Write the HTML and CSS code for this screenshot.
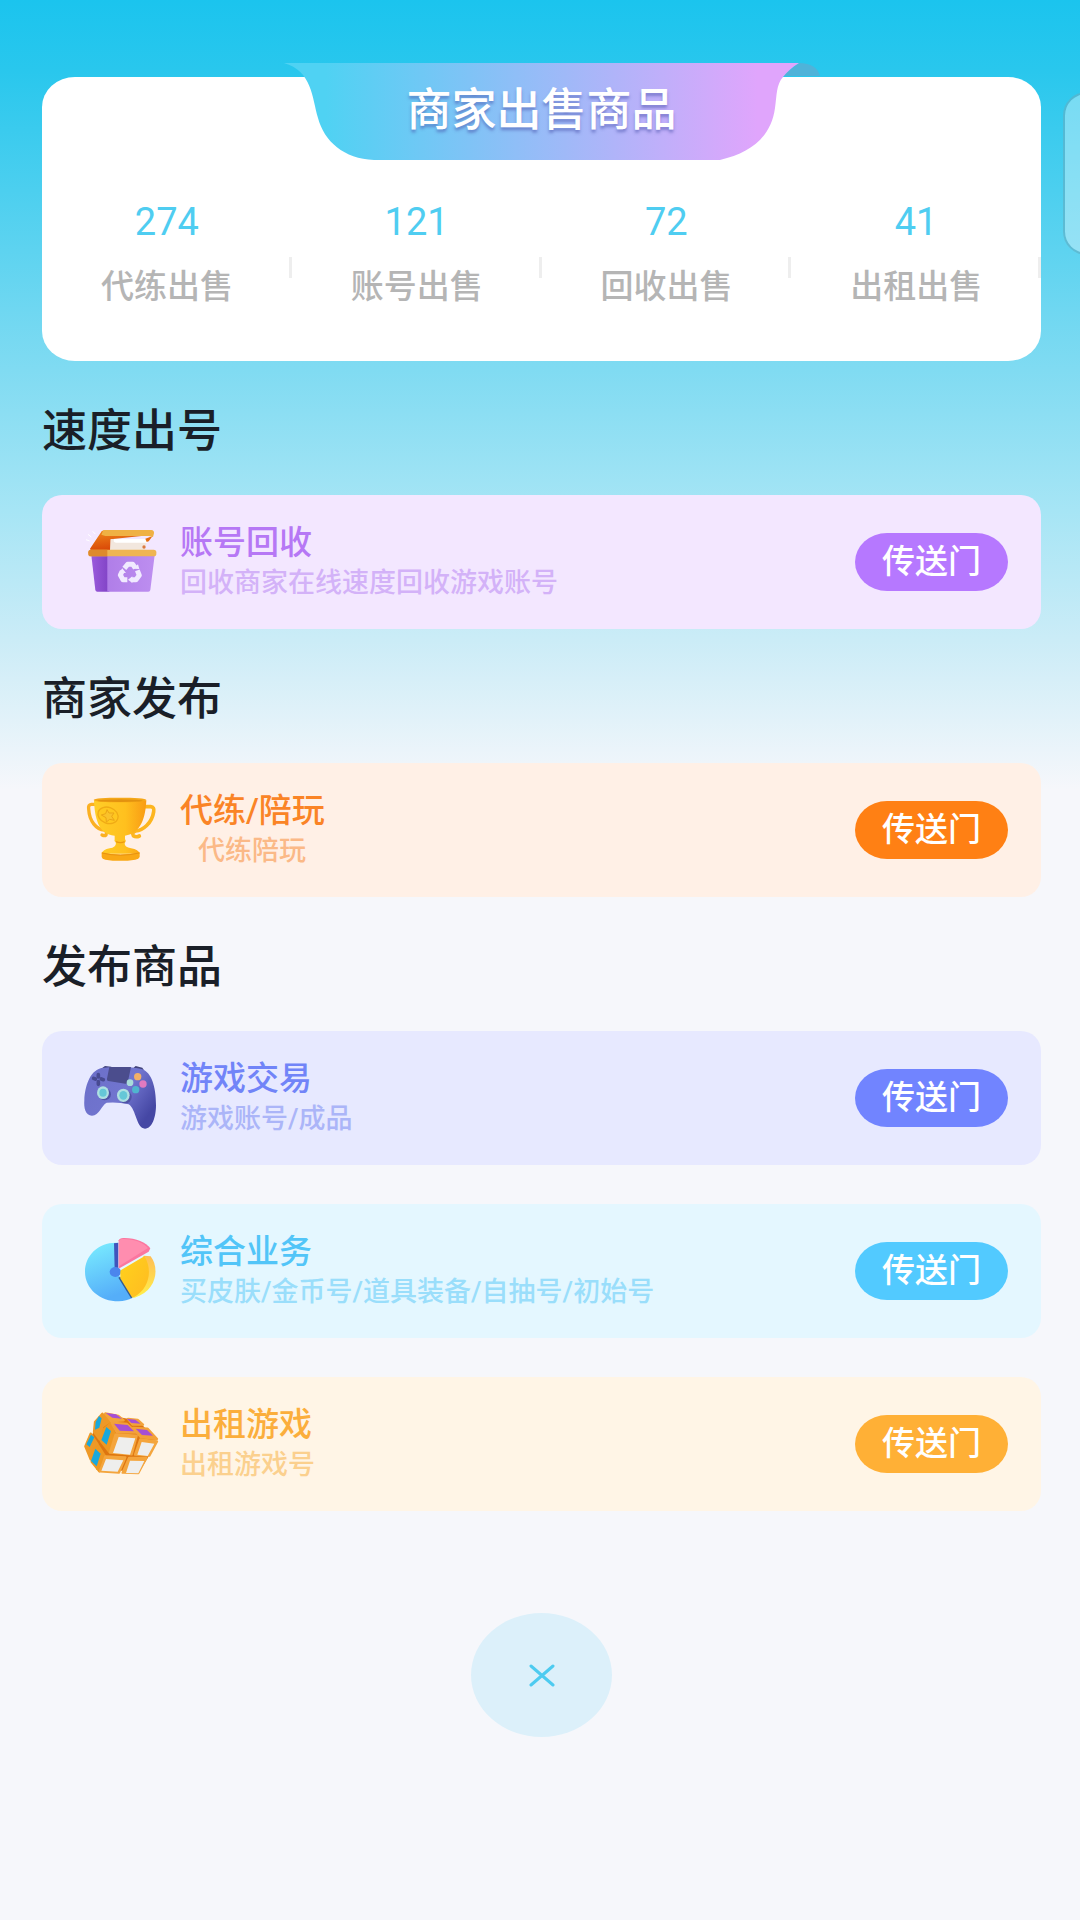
FILE: index.html
```html
<!DOCTYPE html>
<html lang="zh-CN">
<head>
    <meta charset="UTF-8">
    <meta name="viewport" content="width=device-width, initial-scale=1.0">
    <title>商家出售商品</title>
    <link rel="stylesheet" href="styles.css">
</head>
<body>

    <button type="button" class="side-tab" aria-label="菜单"></button>

    <main class="page">
        <section class="stats-card">
            <div class="banner">
                <svg class="banner-shape" viewBox="0 0 556 97" aria-hidden="true">
                    <defs>
                        <linearGradient id="bannerFill" x1="0" x2="1" y1="0" y2="0">
                            <stop offset="0.08" stop-color="#4fd2f3"/>
                            <stop offset="0.92" stop-color="#e0a5fc"/>
                        </linearGradient>
                    </defs>
                    <path d="M535 0C547 0 554 5 556 13H518Z" fill="#4fb3d9"/>
                    <path d="M20 0H535C528 4 523 9 519 14C512 22 513 32 511 45C507 74 487 90 456 97H110C80 96 60 78 54 55C48 34 48 8 20 0Z" fill="url(#bannerFill)"/>
                </svg>
                <h1>商家出售商品</h1>
            </div>
            <ul class="stats">
                <li><strong>274</strong><span>代练出售</span></li>
                <li><strong>121</strong><span>账号出售</span></li>
                <li><strong>72</strong><span>回收出售</span></li>
                <li><strong>41</strong><span>出租出售</span></li>
            </ul>
        </section>

        <section>
            <h2>速度出号</h2>
            <div class="cards">
                <article class="card purple">
                    <svg class="card-icon" viewBox="30 57 240 210" aria-hidden="true">
                        <defs>
                            <linearGradient id="binFront"><stop offset="0" stop-color="#b07ee8"/><stop offset="1" stop-color="#bd8ef0"/></linearGradient>
                            <linearGradient id="binSide"><stop offset="0" stop-color="#9a5bdc"/><stop offset="1" stop-color="#7f41c4"/></linearGradient>
                            <linearGradient id="binLid" x1="0" x2="0.4" y1="0" y2="1"><stop offset="0" stop-color="#f08a1c"/><stop offset="1" stop-color="#d63f05"/></linearGradient>
                        </defs>
                        <path d="M68 70L76 78M54 79L64 87M48 95L59 99" stroke="#fff" stroke-width="3"/>
                        <path d="M96 68L60 122L64 130H122V94L250 80Z" fill="url(#binLid)"/>
                        <path d="M122 94H232L225 126H120Z" fill="#f2e7de"/>
                        <path d="M132 93H228Q236 96 232 104H138Q128 102 132 93Z" fill="#fff"/>
                        <path d="M226 92L248 84L236 100L230 102Z" fill="#e66d12"/>
                        <circle cx="222" cy="117" r="5" fill="#dc7a42"/>
                        <path d="M100 66H244Q253 67 252 76L249 87L236 84H106L94 80Z" fill="#efb144"/>
                        <path d="M64 142H120L118 251H82Q77 251 76 246Z" fill="url(#binSide)"/>
                        <path d="M112 142H254L241 246Q240 251 235 251H112Z" fill="url(#binFront)"/>
                        <rect x="55" y="125" width="204" height="20" rx="8" fill="#efb552"/>
                        <path d="M55 133Q55 125 63 125H112V145H63Q55 145 55 137Z" fill="#de8a2d"/>
                        <g fill="none" stroke="#f1eaff" stroke-width="15" stroke-linejoin="round">
                            <path d="M163 181L173 169H188L196 180"/>
                            <path d="M202 187L208 202L198 215H184"/>
                            <path d="M172 215H159L151 201L157 189"/>
                        </g>
                        <path d="M188 182L208 183L204 169ZM187 205V225L174 215ZM147 194L157 181L168 195Z" fill="#f1eaff"/>
                    </svg>
                    <div class="card-text">
                        <h3>账号回收</h3>
                        <p>回收商家在线速度回收游戏账号</p>
                    </div>
                    <button type="button">传送门</button>
                </article>
            </div>
        </section>

        <section>
            <h2>商家发布</h2>
            <div class="cards">
                <article class="card orange">
                    <svg class="card-icon" viewBox="30 50 240 210" aria-hidden="true">
                        <defs>
                            <linearGradient id="cup"><stop offset="0" stop-color="#ffce28"/><stop offset="0.6" stop-color="#ffc01e"/><stop offset="1" stop-color="#f99b14"/></linearGradient>
                        </defs>
                        <path d="M76 78H64Q54 79 56 92C58 130 80 154 103 155Q112 158 108 170Q104 174 96 170" fill="none" stroke="#fbb022" stroke-width="10" stroke-linecap="round"/>
                        <path d="M226 85H242Q254 86 251 100C246 135 218 156 197 158Q184 162 190 172Q198 178 208 173" fill="none" stroke="#fdb51f" stroke-width="11" stroke-linecap="round"/>
                        <path d="M72 66C74 116 84 170 134 172V183Q131 188 138 193Q138 207 119 210Q98 214 95 226H209Q206 214 183 210Q163 207 164 194Q170 188 165 183V172C213 166 227 116 229 66Z" fill="url(#cup)"/>
                        <ellipse cx="150" cy="65" rx="79" ry="7" fill="#f5a717"/>
                        <ellipse cx="150" cy="67" rx="68" ry="4" fill="#e3920f"/>
                        <ellipse cx="114" cy="111" rx="31" ry="24" transform="rotate(20 114 111)" fill="#ffc71f" stroke="#f0ab15" stroke-width="4"/>
                        <path d="M111 94L117 104L132 104L125 114L133 126L119 123L109 131L108 118L94 110L107 106Z" fill="#fac22b" stroke="#eba516" stroke-width="3"/>
                        <path d="M138 190Q151 196 164 190" fill="none" stroke="#ec9a10" stroke-width="4"/>
                        <path d="M95 222Q150 235 209 222V236Q207 242 196 244Q150 251 106 244Q96 242 95 236Z" fill="#f9a816"/>
                        <path d="M96 224Q150 237 208 224" fill="none" stroke="#e8920f" stroke-width="3"/>
                    </svg>
                    <div class="card-text">
                        <h3>代练/陪玩</h3>
                        <p class="indent">代练陪玩</p>
                    </div>
                    <button type="button">传送门</button>
                </article>
            </div>
        </section>

        <section>
            <h2>发布商品</h2>
            <div class="cards">
                <article class="card blue">
                    <svg class="card-icon" viewBox="30 57 240 210" aria-hidden="true">
                        <defs>
                            <linearGradient id="pad" x1="0" x2="1" y1="0" y2="0.6"><stop offset="0" stop-color="#6c6fc9"/><stop offset="0.6" stop-color="#7175cf"/><stop offset="1" stop-color="#4547a4"/></linearGradient>
                        </defs>
                        <path d="M91 76L105 66L124 68V80ZM190 72L197 66L217 71L223 80Z" fill="#41437c"/>
                        <path d="M92 73C120 67 190 67 217 76C244 86 258 126 258 184C258 218 247 254 225 254C199 254 199 196 176 181Q144 173 110 176C94 184 88 215 66 215C46 215 41 192 43 168C45 128 59 82 92 73Z" fill="url(#pad)"/>
                        <path d="M118 69H183L173 116Q171 119 166 119L115 111Q109 109 111 104Z" fill="#4b4d8d"/>
                        <path d="M85 92V99M85 113V121M71 103L76 105M94 105L100 107" stroke="#484a92" stroke-width="11" stroke-linecap="round"/>
                        <ellipse cx="104" cy="151" rx="19" ry="18" fill="#5053a5"/>
                        <ellipse cx="166" cy="159" rx="19" ry="19" fill="#5053a5"/>
                        <ellipse cx="99" cy="146" rx="18" ry="19" fill="#aee0e2"/>
                        <ellipse cx="99" cy="146" rx="11" ry="12" fill="#65c7d7"/>
                        <ellipse cx="160" cy="154" rx="19" ry="20" fill="#aee0e2"/>
                        <ellipse cx="160" cy="154" rx="12" ry="13" fill="#65c7d7"/>
                        <circle cx="203" cy="98" r="11" fill="#f3b067"/>
                        <circle cx="180" cy="116" r="10" fill="#a9ddda"/>
                        <circle cx="219" cy="120" r="11" fill="#e17ac0"/>
                        <circle cx="197" cy="137" r="11" fill="#50b4cf"/>
                    </svg>
                    <div class="card-text">
                        <h3>游戏交易</h3>
                        <p>游戏账号/成品</p>
                    </div>
                    <button type="button">传送门</button>
                </article>

                <article class="card cyan">
                    <svg class="card-icon" viewBox="30 51 240 210" aria-hidden="true">
                        <defs>
                            <linearGradient id="pieBlue" x1="0" x2="0.3" y1="0" y2="1"><stop offset="0" stop-color="#7befff"/><stop offset="1" stop-color="#55aef9"/></linearGradient>
                            <linearGradient id="pieYellow" x1="0" x2="1" y1="0" y2="0.8"><stop offset="0" stop-color="#ffd21c"/><stop offset="1" stop-color="#ffbd21"/></linearGradient>
                            <linearGradient id="pieEdge" x1="0" x2="0" y1="0" y2="1"><stop offset="0" stop-color="#ffbd55"/><stop offset="1" stop-color="#fff04a"/></linearGradient>
                        </defs>
                        <path d="M140 71C84 70 45 110 45 158C45 209 90 247 146 247Q170 246 187 237L141 159Z" fill="url(#pieBlue)"/>
                        <path d="M132 73L145 71V149L134 151Z" fill="#3f55bd"/>
                        <path d="M145 176L151 173L189 234L183 238Z" fill="#355c91"/>
                        <ellipse cx="136" cy="159" rx="17" ry="15" fill="#4b86ed"/>
                        <path d="M146 148V64Q148 58 160 57C196 56 228 70 241 88L236 98L151 146Z" fill="#fb769f"/>
                        <path d="M147 142V68Q147 60 158 60C190 59 221 71 234 87Z" fill="#ff8daf"/>
                        <path d="M221 110L242 112C268 145 263 214 194 236L186 234Z" fill="url(#pieEdge)"/>
                        <path d="M151 160Q150 154 157 151L223 112C248 150 240 208 191 235Q187 237 184 232L151 178Z" fill="url(#pieYellow)"/>
                    </svg>
                    <div class="card-text">
                        <h3>综合业务</h3>
                        <p>买皮肤/金币号/道具装备/自抽号/初始号</p>
                    </div>
                    <button type="button">传送门</button>
                </article>

                <article class="card yellow">
                    <svg class="card-icon" viewBox="30 45 240 210" aria-hidden="true">
                        <!-- gaps between the blocks -->
                        <path d="M98 60L205 80L256 135L240 181L209 232L80 228L50 154Z" fill="#dd7510"/>
                        <g stroke-linejoin="round" stroke-width="7">
                            <path d="M106 58L145 66L161 79L121 82L96 74Z" fill="#f3a43b" stroke="#f3a43b"/>
                            <path d="M174 75L203 78L219 92L188 92Z" fill="#f3a43b" stroke="#f3a43b"/>
                            <path d="M97 59L117 84L97 98L89 137L72 114L75 84Z" fill="#ee9927" stroke="#ee9927"/>
                            <path d="M62 119L83 151L69 172L62 196L46 157Z" fill="#ee9927" stroke="#ee9927"/>
                            <path d="M122 88L133 118L118 174L93 142L101 106Z" fill="#ee9822" stroke="#ee9822"/>
                            <path d="M85 155L104 185L88 232L65 203L69 174Z" fill="#ee9822" stroke="#ee9822"/>
                            <path d="M125 86L171 90L200 116L140 115Z" fill="#f3a13a" stroke="#f3a13a"/>
                            <path d="M189 102L233 104L261 135L212 129Z" fill="#f3a13a" stroke="#f3a13a"/>
                            <path d="M137 121L200 125L185 181L120 176Z" fill="#f4a53d" stroke="#f4a53d"/>
                            <path d="M211 136L261 142L238 185L195 182Z" fill="#f4a53d" stroke="#f4a53d"/>
                            <path d="M106 187L166 190L147 236L90 232Z" fill="#f4a53d" stroke="#f4a53d"/>
                            <path d="M177 192L229 192L205 237L158 236Z" fill="#f4a53d" stroke="#f4a53d"/>
                        </g>
                        <path d="M107 57L138 61L156 74L127 71ZM170 74L196 77L212 89L184 87ZM132 89L173 93L192 112L149 110ZM197 104L231 108L249 125L216 123Z" fill="#a64fd5"/>
                        <path d="M87 66L95 73L88 101L75 107L77 84ZM63 122L73 130L59 159L49 151ZM109 99L123 111L110 152L94 138ZM76 164L92 179L80 217L63 201Z" fill="#19a8dc"/>
                        <path d="M146 129L196 133L180 182L129 177ZM215 144L253 149L233 186L202 182ZM108 195L160 199L143 233L94 230ZM180 200L223 201L205 238L168 237Z" fill="#eeeeed"/>
                    </svg>
                    <div class="card-text">
                        <h3>出租游戏</h3>
                        <p>出租游戏号</p>
                    </div>
                    <button type="button">传送门</button>
                </article>
            </div>
        </section>

        <button type="button" class="close" aria-label="关闭">
            <svg viewBox="0 0 26 23" aria-hidden="true">
                <path d="M2 2L24 21M24 2L2 21" fill="none" stroke="#4dcbf0" stroke-width="3" stroke-linecap="round"/>
            </svg>
        </button>
    </main>

</body>
</html>
```
FILE: styles.css
```css
/* Reset and Body Styling */
* {
    margin: 0;
    padding: 0;
    box-sizing: border-box;
}
body {
    position: relative;
    min-height: 100vh;
    font-family: Roboto, "Noto Sans CJK SC", sans-serif;
    color: #1a1f28;
    background: #f6f7fb linear-gradient(#1bc4ee 0, #29c7ed 70px, #80dbf2 370px, #a6e5f5 510px, #cbecf7 640px, #f6f7fb 790px) no-repeat;
    overflow-x: hidden;
}
button {
    border: none;
    font-family: inherit;
    cursor: pointer;
}
.page {
    display: flex;
    flex-direction: column;
    padding: 77px 39px 0 42px;
}

/* Tab on the right edge */
.side-tab {
    position: absolute;
    top: 92px;
    right: -30px;
    width: 47px;
    height: 163px;
    border: 2px solid rgba(40, 150, 180, 0.5);
    border-radius: 24px;
    background-color: rgba(255, 255, 255, 0.35);
}

/* Stats */
.stats-card {
    position: relative;
    padding: 120px 0 50px;
    border-radius: 33px / 30px;
    background-color: #ffffff;
}
.banner {
    position: absolute;
    top: -14px;
    left: 50%;
    width: 556px;
    height: 97px;
    transform: translateX(-50%);
}
.banner-shape {
    display: block;
    width: 100%;
}
.banner h1 {
    position: absolute;
    inset: 0;
    font-size: 45px;
    font-weight: 500;
    line-height: 96px;
    text-align: center;
    color: #ffffff;
    text-shadow: 0 3px 3px rgba(70, 80, 170, 0.5);
}
.stats {
    display: flex;
    list-style: none;
}
.stats li {
    position: relative;
    flex: 1;
    display: flex;
    flex-direction: column;
    gap: 20px;
    padding-bottom: 4px;
    text-align: center;
}
.stats li::after {
    content: "";
    position: absolute;
    top: 60px;
    right: 0;
    width: 3px;
    height: 21px;
    background-color: #eeeeee;
}
.stats strong {
    font-size: 38px;
    font-weight: 400;
    line-height: 50px;
    color: #4fcdf1;
}
.stats span {
    font-size: 33px;
    font-weight: 500;
    line-height: 40px;
    color: #b5b5b5;
}

/* Sections */
h2 {
    padding-top: 8px;
    font-size: 45px;
    font-weight: 500;
    line-height: 126px;
}
.cards {
    display: flex;
    flex-direction: column;
    gap: 39px;
}
.card {
    display: flex;
    align-items: center;
    gap: 20px;
    min-height: 134px;
    padding: 0 33px 0 38px;
    border-radius: 20px;
}
.card-icon {
    width: 80px;
    height: 70px;
}
.card-text {
    flex: 1;
    padding-top: 2px;
}
.card h3 {
    font-size: 33px;
    font-weight: 500;
    line-height: 40px;
}
.card p {
    font-size: 27px;
    font-weight: 500;
    line-height: 40px;
}
.card p.indent {
    padding-left: 18px;
}
.card button {
    width: 153px;
    height: 58px;
    border-radius: 32px / 29px;
    font-size: 33px;
    font-weight: 500;
    line-height: 56px;
    color: #ffffff;
}

/* Card colours */
.purple {
    background-color: #f3e7ff;
}
.purple h3 {
    color: #b678f5;
}
.purple p {
    color: #d3b2f8;
}
.purple button {
    background-color: #b678ff;
}
.orange {
    background-color: #fff0e6;
}
.orange h3 {
    color: #fa8426;
}
.orange p {
    color: #fbb987;
}
.orange button {
    background-color: #ff8014;
}
.blue {
    background-color: #e7e9ff;
}
.blue h3 {
    color: #7184f8;
}
.blue p {
    color: #abb5f8;
}
.blue button {
    background-color: #7184ff;
}
.cyan {
    background-color: #e4f7ff;
}
.cyan h3 {
    color: #52c5f8;
}
.cyan p {
    color: #9adefb;
}
.cyan button {
    background-color: #52caff;
}
.yellow {
    background-color: #fff5e6;
}
.yellow h3 {
    color: #fbae3c;
}
.yellow p {
    color: #fbd08e;
}
.yellow button {
    background-color: #ffb036;
}

/* Close button */
.close {
    display: flex;
    align-items: center;
    justify-content: center;
    align-self: center;
    width: 141px;
    height: 124px;
    margin: 102px 0 60px;
    border-radius: 50%;
    background-color: #dcf0fa;
}
.close svg {
    width: 26px;
    height: 23px;
}
```
